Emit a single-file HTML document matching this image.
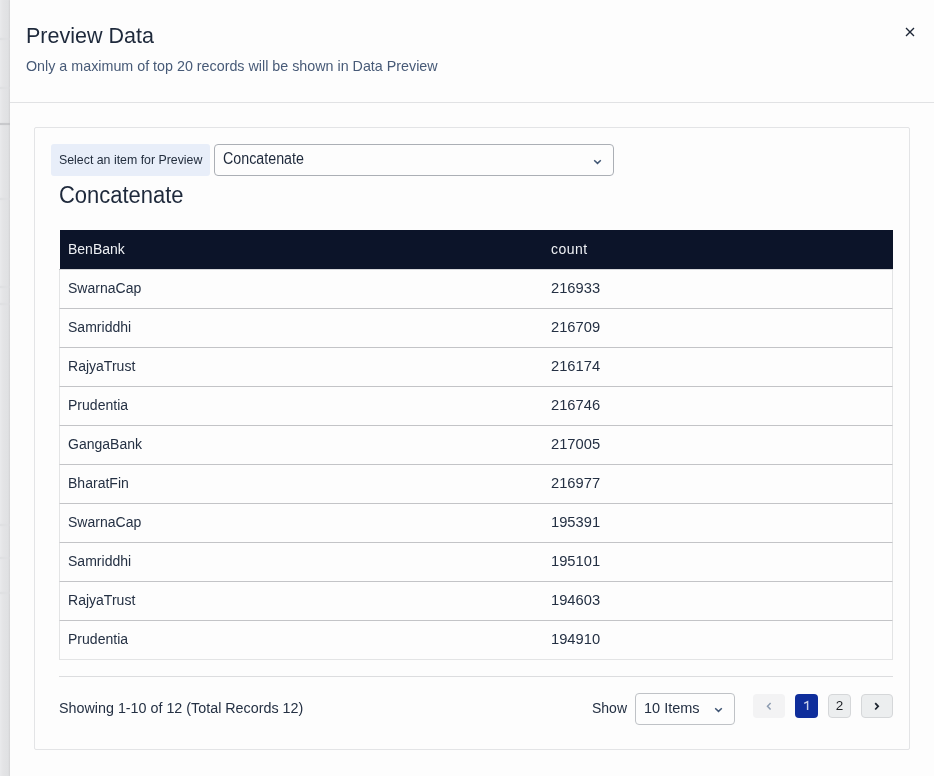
<!DOCTYPE html>
<html>
<head>
<meta charset="utf-8">
<style>
*{box-sizing:border-box;margin:0;padding:0}
html,body{width:934px;height:776px;overflow:hidden;background:#e6e7e9;font-family:"Liberation Sans",sans-serif;-webkit-font-smoothing:antialiased}
#bg{position:absolute;left:0;top:0;width:10px;height:776px;background:linear-gradient(90deg,#e9eaec 0,#e4e4e6 30%,#e1e2e4 60%,#e0e1e3 85%,#d9d9db 100%)}
.bgl{position:absolute;left:0;width:10px;height:2px;background:#dfe0e2;box-shadow:0 0 2px #dfe0e2}
#modal{position:absolute;left:10px;top:0;width:924px;height:776px;background:#fdfdfd;will-change:transform;box-shadow:-1px 0 2px rgba(0,0,0,.04)}
.abs{position:absolute;white-space:nowrap}
#title{left:16px;top:23px;font-size:21.5px;color:#1e293b;line-height:26px}
#sub{left:16px;top:57px;font-size:14.3px;color:#475a77;line-height:18px}
#close{left:895px;top:27px;width:10px;height:10px}
#hdrline{position:absolute;left:0;top:102px;width:924px;height:1px;background:#e1e2e4}
#card{position:absolute;left:24px;top:127px;width:876px;height:623px;border:1px solid #e3e4e6;border-radius:2px}
#lbl{left:41px;top:144px;width:159px;height:32px;background:#e8eef9;border-radius:3px;font-size:12.35px;color:#232e3e;line-height:32px;padding-left:8px}
#sel{left:204px;top:144px;width:400px;height:32px;border:1px solid #abafb5;border-radius:4px;font-size:15.6px;color:#1e293b;line-height:27px;padding-left:8px}
.sx{display:inline-block;transform-origin:0 50%}
#h2{left:49px;top:182px;font-size:23px;color:#1e293b;line-height:26px}
#tbl{position:absolute;left:49px;top:230px;width:834px}
.hr{position:absolute;left:1px;top:0;width:833px;height:39px;background:#0c1429}
.hb{position:absolute;left:0;top:39px;width:834px;height:1px;background:linear-gradient(90deg,#bdbec1 1px,#d6d7da 1px)}
.row{position:absolute;left:0;width:834px;height:39px;border-left:1px solid #e3e4e5;border-right:1px solid #e3e4e5;border-bottom:1px solid #c3c4c7}
.c1,.c2{position:absolute;top:-1px;font-size:14px;line-height:38px;color:#243043}
.c1{left:8px}
.c2{left:491px}
.row .c1{font-size:14.7px;transform:scaleX(0.955);transform-origin:0 50%}
.row .c2{font-size:15px;transform:scaleX(0.98);transform-origin:0 50%}
.hr .c1,.hr .c2{color:#eef0f4;line-height:38px;top:0}
.hr .c1{left:8px}
.hr .c2{left:491px;letter-spacing:0.5px}
#divline{position:absolute;left:49px;top:676px;width:834px;height:1px;background:#dcdddf}
#showing{left:49px;top:699px;font-size:14.32px;color:#243043;line-height:18px}
#show{left:582px;top:699px;font-size:14px;color:#243043;line-height:18px}
#items{left:625px;top:693px;width:100px;height:32px;border:1px solid #bfc2c6;border-radius:4px;font-size:14.5px;color:#243043;line-height:28px;padding-left:8px}
.pb{position:absolute;top:694px;height:24px;border-radius:4px;font-size:13.5px;line-height:24px;text-align:center}
#prev{left:743px;width:32px;background:#f3f3f4}
#p1{left:785px;width:23px;background:#0f2e9b;color:#c9d0e8}
#p2{left:818px;width:23px;background:#eceeef;border:1px solid #d5d7d9;color:#1f2226;line-height:22px}
#next{left:851px;width:32px;background:#eceeef;border:1px solid #d5d7d9}
</style>
</head>
<body>
<div id="bg"></div>
<div class="bgl" style="top:38px"></div>
<div class="bgl" style="top:87px"></div>
<div class="bgl" style="top:123px;background:#c8c9cc;height:2px;box-shadow:0 0 1px #c8c9cc"></div>
<div class="bgl" style="top:198px"></div>
<div class="bgl" style="top:286px"></div>
<div class="bgl" style="top:303px"></div>
<div class="bgl" style="top:524px"></div>
<div class="bgl" style="top:557px"></div>
<div class="bgl" style="top:592px"></div>
<div id="modal">
  <div id="title" class="abs">Preview Data</div>
  <div id="sub" class="abs">Only a maximum of top 20 records will be shown in Data Preview</div>
  <svg id="close" class="abs" viewBox="0 0 10 10"><path d="M1.5 1.5L8.5 8.5M8.5 1.5L1.5 8.5" stroke="#1d2636" stroke-width="1.35" stroke-linecap="square"/></svg>
  <div id="hdrline"></div>
  <div id="card"></div>
  <div id="lbl" class="abs">Select an item for Preview</div>
  <div id="sel" class="abs"><span class="sx" style="transform:scaleX(0.915)">Concatenate</span><svg style="position:absolute;left:378px;top:14px" width="9" height="6" viewBox="0 0 9 6"><path d="M1.2 1.3L4.5 4.4L7.8 1.3" fill="none" stroke="#3f5573" stroke-width="1.45"/></svg></div>
  <div id="h2" class="abs"><span class="sx" style="transform:scaleX(0.955)">Concatenate</span></div>
  <div id="tbl">
    <div class="hb"></div>
    <div class="hr"><span class="c1">BenBank</span><span class="c2">count</span></div>
    <div class="row" style="top:40px"><span class="c1">SwarnaCap</span><span class="c2">216933</span></div>
    <div class="row" style="top:79px"><span class="c1">Samriddhi</span><span class="c2">216709</span></div>
    <div class="row" style="top:118px"><span class="c1">RajyaTrust</span><span class="c2">216174</span></div>
    <div class="row" style="top:157px"><span class="c1">Prudentia</span><span class="c2">216746</span></div>
    <div class="row" style="top:196px"><span class="c1">GangaBank</span><span class="c2">217005</span></div>
    <div class="row" style="top:235px"><span class="c1">BharatFin</span><span class="c2">216977</span></div>
    <div class="row" style="top:274px"><span class="c1">SwarnaCap</span><span class="c2">195391</span></div>
    <div class="row" style="top:313px"><span class="c1">Samriddhi</span><span class="c2">195101</span></div>
    <div class="row" style="top:352px"><span class="c1">RajyaTrust</span><span class="c2">194603</span></div>
    <div class="row" style="top:391px;border-bottom-color:#e3e4e5"><span class="c1">Prudentia</span><span class="c2">194910</span></div>
  </div>
  <div id="divline"></div>
  <div id="showing" class="abs">Showing 1-10 of 12 (Total Records 12)</div>
  <div id="show" class="abs">Show</div>
  <div id="items" class="abs">10 Items<svg style="position:absolute;left:78px;top:13px" width="9" height="6" viewBox="0 0 9 6"><path d="M1.2 1.3L4.5 4.4L7.8 1.3" fill="none" stroke="#3f5573" stroke-width="1.45"/></svg></div>
  <div id="prev" class="pb"><svg style="position:absolute;left:13px;top:8px" width="6" height="9" viewBox="0 0 6 9"><path d="M4.6 1.1L1.5 4.3L4.6 7.5" fill="none" stroke="#8d9cb1" stroke-width="1.5"/></svg></div>
  <div id="p1" class="pb"><svg style="position:absolute;left:0;top:0" width="23" height="24" viewBox="0 0 23 24"><path d="M9.2 9.3L12.6 7.6V16.1" fill="none" stroke="#c9d0e8" stroke-width="1.45"/></svg></div>
  <div id="p2" class="pb">2</div>
  <div id="next" class="pb"><svg style="position:absolute;left:12px;top:7px" width="6" height="9" viewBox="0 0 6 9"><path d="M1.2 1.1L4.2 4.3L1.2 7.5" fill="none" stroke="#1e2530" stroke-width="1.75"/></svg></div>
</div>
</body>
</html>
